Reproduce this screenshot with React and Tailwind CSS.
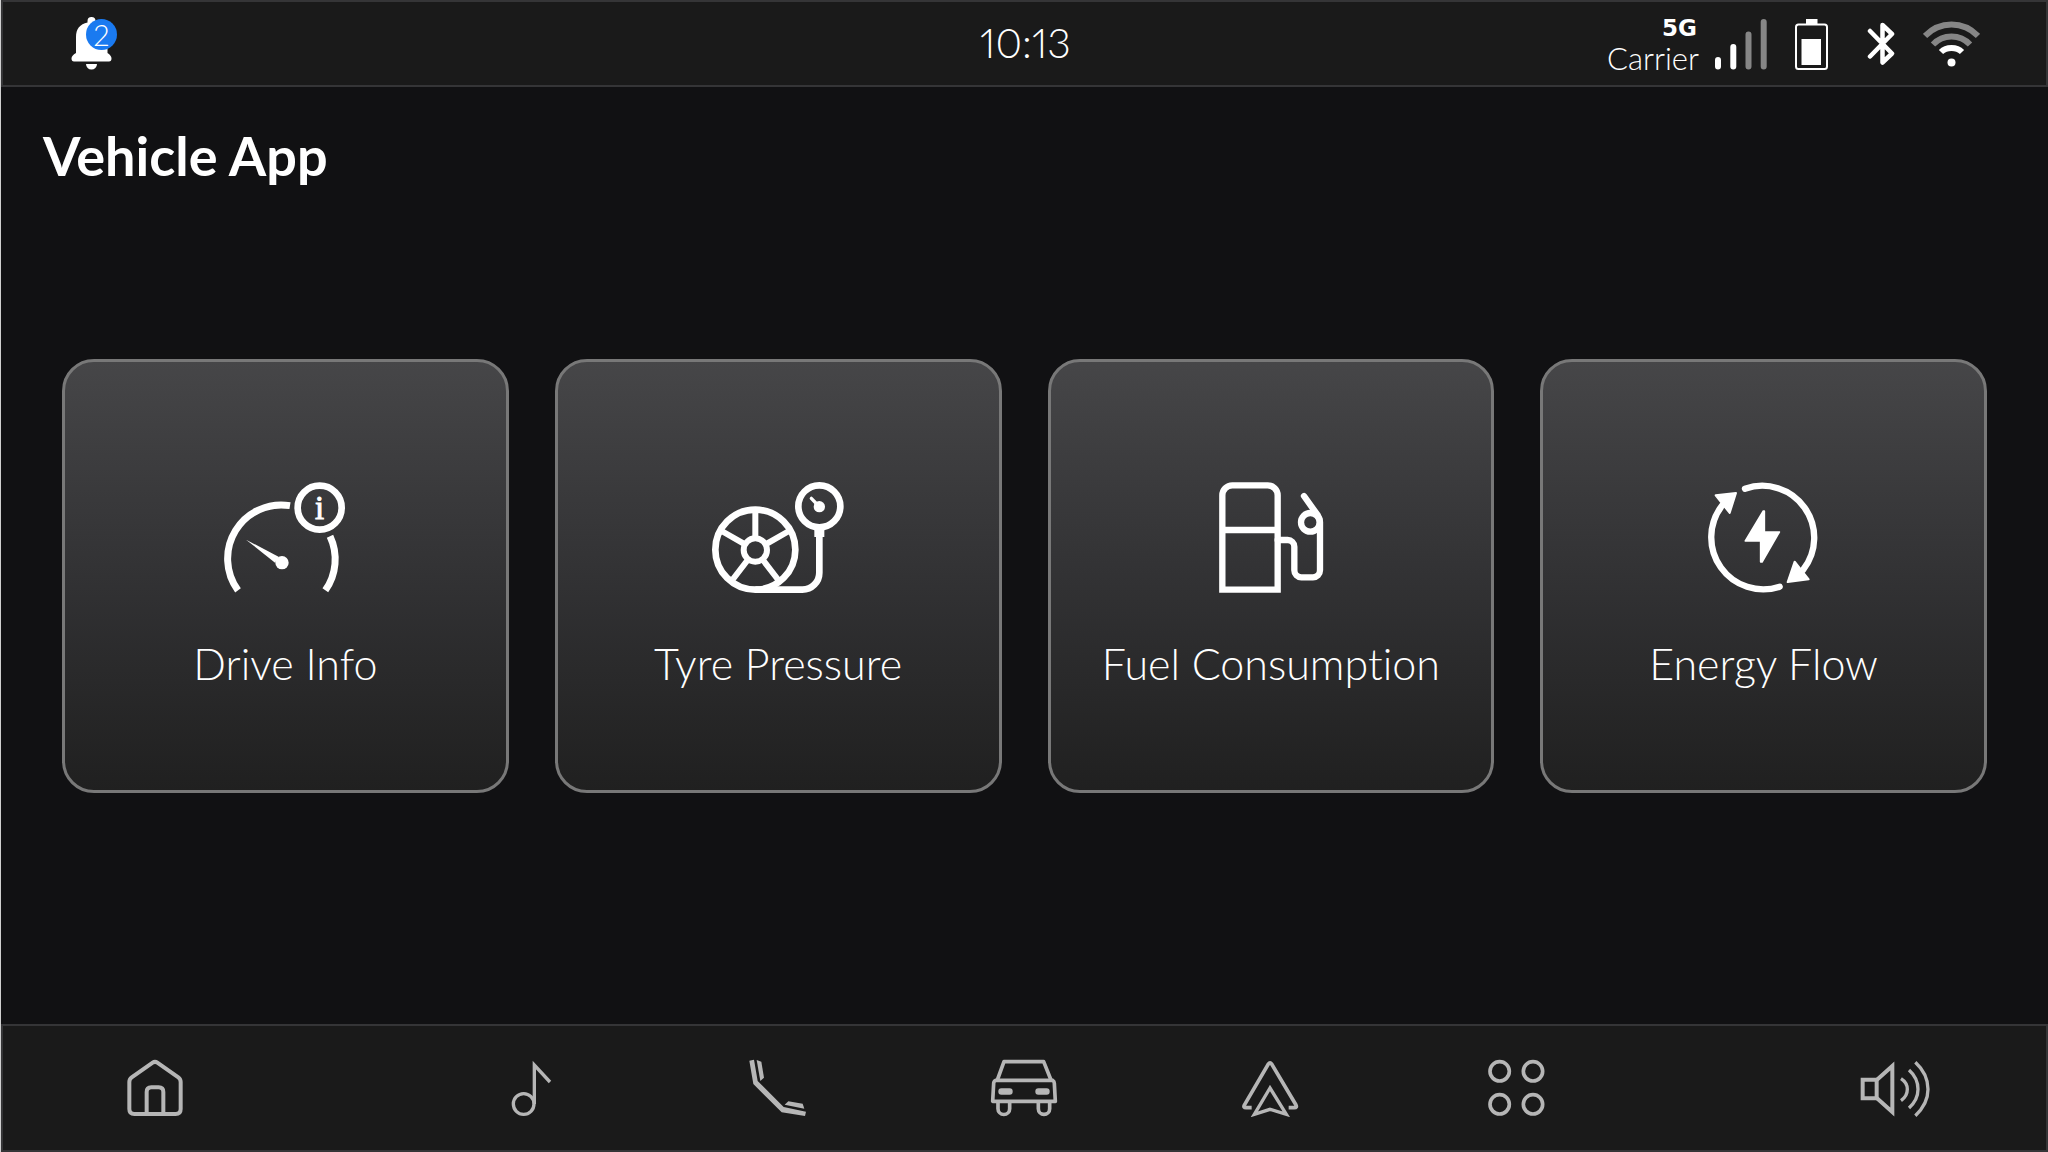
import React, { useState } from 'react'

const DriveInfoIcon = () => (
  <svg viewBox="64 66 384 336" className="h-[112px] w-32" fill="none" stroke="currentColor" aria-hidden="true">
    <path d="M115 391 A161 161 0 0 1 271 137" strokeWidth="21" />
    <path d="M391 229 A161 161 0 0 1 377 391" strokeWidth="21" />
    <circle cx="360" cy="143" r="66" strokeWidth="20" />
    <path d="M139 239 L238 291 L226 308 Z" fill="currentColor" stroke="none" />
    <circle cx="247" cy="308" r="20" fill="currentColor" stroke="none" />
    <text
      x="360"
      y="176"
      textAnchor="middle"
      fill="currentColor"
      strokeWidth="3"
      className="font-['Liberation_Serif',serif] text-[98px]"
    >
      i
    </text>
  </svg>
)

const TyrePressureIcon = () => (
  <svg viewBox="43 66 384 336" className="h-[112px] w-32 overflow-visible" fill="none" stroke="currentColor" aria-hidden="true">
    <circle cx="167" cy="269" r="120" strokeWidth="20" />
    <circle cx="167" cy="270" r="35" strokeWidth="18" />
    <path
      d="M167 150 V234 M66 213 L131 250 M268 213 L203 250 M98 360 L144 300 M236 360 L190 300"
      strokeWidth="18"
    />
    <path d="M167 389 H308 A51 51 0 0 0 359 338 V220" strokeWidth="20" />
    <path d="M359 205 V231" strokeWidth="30" />
    <circle cx="359" cy="139" r="63" strokeWidth="20" />
    <circle cx="359" cy="140" r="17" fill="currentColor" stroke="none" />
    <path d="M335 115 L357 138" strokeWidth="10" strokeLinecap="round" />
  </svg>
)

const FuelIcon = () => (
  <svg viewBox="22 66 384 336" className="h-[112px] w-32" fill="none" stroke="currentColor" strokeWidth="19" aria-hidden="true">
    <path d="M68 389 V106 A30 30 0 0 1 98 76 H204 A30 30 0 0 1 234 106 V389 Z" />
    <path d="M68 210 H234" />
    <path d="M234 240 H264 A20 20 0 0 1 284 260 V331 A21 21 0 0 0 305 352 H340 A21 21 0 0 0 361 331 V186 Q361 176 355 167 L313 108" strokeLinecap="round" />
    <circle cx="332" cy="187" r="28" />
  </svg>
)

const EnergyIcon = () => (
  <svg viewBox="31 66 384 336" className="h-[112px] w-32" fill="none" stroke="currentColor" strokeLinejoin="round" strokeLinecap="round" aria-hidden="true">
    <path d="M166 86 A156 156 0 0 1 340 330" strokeWidth="19" />
    <path d="M270 380 A156 156 0 0 1 97 137" strokeWidth="19" />
    <path d="M78 106 L139 99 L120 159 Z" fill="currentColor" strokeWidth="6" />
    <path d="M315 305 L357 358 L294 366 Z" fill="currentColor" strokeWidth="6" />
    <path d="M221 153 L167 243 H213 V306 H217 L269 216 H224 V153 Z" fill="currentColor" strokeWidth="5" />
  </svg>
)

const HomeIcon = () => (
  <svg viewBox="57 130 216 174" className="h-[58px] w-[72px]" fill="none" stroke="currentColor" strokeWidth="12" aria-hidden="true">
    <path d="M88 199 Q88 190 95 185 L158 141 Q165 136 172 141 L235 185 Q242 190 242 199 V280 Q242 295 227 295 H103 Q88 295 88 280 Z" />
    <path d="M140 295 V229 Q140 215 154 215 H176 Q190 215 190 229 V295" />
  </svg>
)

const MusicIcon = () => (
  <svg viewBox="1188 130 216 174" className="h-[58px] w-[72px]" fill="none" stroke="currentColor" strokeWidth="10" aria-hidden="true">
    <circle cx="1271" cy="265" r="31" />
    <path d="M1303 265 V148 L1350 199" />
  </svg>
)

const SeatIcon = () => (
  <svg viewBox="36 70 216 174" className="h-[58px] w-[72px]" fill="currentColor" aria-hidden="true">
    <path d="M58 75 L72 72 L83 136 L161 214 L228 228 L225 241 L155 230 L70 145 Z" />
    <path d="M80 73 L94 78 L102 126 L91 136 Z" />
    <path d="M164 207 L175 197 L218 204 L223 219 Z" />
  </svg>
)

const CarIcon = () => (
  <svg viewBox="774 70 216 174" className="h-[58px] w-[72px]" fill="none" stroke="currentColor" strokeWidth="11" strokeLinejoin="round" aria-hidden="true">
    <path d="M802 133 L822 78 H941 L963 133" />
    <path d="M797 134 H968 Q973 137 973 143 L976 197 H788 L791 143 Q791 137 797 134 Z" />
    <path d="M804 199 V219 A17 17 0 0 0 839 219 V199 M925 199 V219 A17 17 0 0 0 959 219 V199" />
    <rect x="805" y="158" width="43" height="19" rx="9" fill="currentColor" stroke="none" />
    <rect x="916" y="158" width="43" height="19" rx="9" fill="currentColor" stroke="none" />
  </svg>
)

const NavigationIcon = () => (
  <svg viewBox="42 70 216 174" className="h-[58px] w-[72px]" fill="none" stroke="currentColor" strokeWidth="11" aria-hidden="true">
    <path d="M95 216 H78 Q69 216 73 208 L145 85 Q150 78 155 85 L228 208 Q232 216 223 216 H206" />
    <path d="M150 157 L103 236 L150 221 L199 236 Z" strokeWidth="10" />
  </svg>
)

const AppsIcon = () => (
  <svg viewBox="780 70 216 174" className="h-[58px] w-[72px]" fill="none" stroke="currentColor" strokeWidth="11" aria-hidden="true">
    <circle cx="839" cy="107" r="29" />
    <circle cx="939" cy="107" r="29" />
    <circle cx="839" cy="206" r="29" />
    <circle cx="939" cy="206" r="29" />
  </svg>
)

const VolumeIcon = () => (
  <svg viewBox="51 70 216 174" className="h-[58px] w-[72px] overflow-visible" fill="none" stroke="currentColor" strokeWidth="12" aria-hidden="true">
    <path d="M68 132 H110 V188 H68 Z" />
    <path d="M111 132 L157 91 V229 L111 188" />
    <path d="M183 129 Q202 141 202 161 Q202 182 183 195 M207 103 Q234 127 234 161 Q234 193 207 217 M226 80 Q264 115 264 161 Q264 205 226 240" strokeWidth="10" />
  </svg>
)

const BellIcon = () => (
  <svg viewBox="0 0 41 53" className="h-[53px] w-[41px]" fill="currentColor" aria-hidden="true">
    <path d="M16.5 4 a4 4 0 0 1 8 0 v1.500 C32 7 36.500 12 36.500 20 V36 Q40.500 38.500 40.500 41.500 Q40.500 44.500 38 44.500 H3 Q.5 44.500 .5 41.500 Q.5 38.500 5 36 V20 C5 12 9 7 16.500 5.500 Z" />
    <path d="M15 47 H26 A5.500 5.500 0 0 1 15 47 Z" />
  </svg>
)

const SignalIcon = () => (
  <svg viewBox="0 0 52 52" className="h-[52px] w-[52px]" strokeWidth="6" strokeLinecap="round" aria-hidden="true">
    <path d="M3 42 V48.500 M18.300 29 V48.500" stroke="#ffffff" />
    <path d="M33.500 16.500 V48.500 M48.700 4 V48.500" stroke="#868686" />
  </svg>
)

const BatteryIcon = () => (
  <svg viewBox="0 0 33 52" className="h-[52px] w-[33px]" fill="currentColor" aria-hidden="true">
    <rect x="1" y="6.500" width="31" height="44.500" rx="2.500" fill="none" stroke="currentColor" strokeWidth="2" />
    <rect x="11" y="1" width="11.500" height="5.500" />
    <rect x="6.500" y="21" width="19.500" height="26" />
  </svg>
)

const BluetoothIcon = () => (
  <svg viewBox="0 0 28 44" className="h-[44px] w-7" fill="none" stroke="currentColor" strokeWidth="4.500" strokeLinecap="round" strokeLinejoin="round" aria-hidden="true">
    <path d="M3 9 L25 31.500 L15.500 40.500 V3 L25 12 L3 34.500" />
  </svg>
)

const WifiIcon = () => (
  <svg viewBox="0 0 57 46" className="h-[46px] w-[57px]" fill="none" strokeWidth="6" aria-hidden="true">
    <path d="M2 15 Q13 3.500 28.500 3.500 Q44 3.500 55 15" stroke="#868686" />
    <path d="M10 23.500 Q17.500 15.500 28.500 15.500 Q39.500 15.500 47 23.500" stroke="#868686" />
    <path d="M18 31 Q22 27 28.500 27 Q35 27 39 31" stroke="#ffffff" />
    <circle cx="28.500" cy="41.500" r="4" fill="#ffffff" />
  </svg>
)

const apps = [
  { id: 'drive', label: 'Drive Info', Icon: DriveInfoIcon },
  { id: 'tyre', label: 'Tyre Pressure', Icon: TyrePressureIcon },
  { id: 'fuel', label: 'Fuel Consumption', Icon: FuelIcon },
  { id: 'energy', label: 'Energy Flow', Icon: EnergyIcon }
]

const navItems = [
  { id: 'music', label: 'Music', Icon: MusicIcon },
  { id: 'seat', label: 'Seat', Icon: SeatIcon },
  { id: 'car', label: 'Vehicle', Icon: CarIcon },
  { id: 'navigation', label: 'Navigation', Icon: NavigationIcon },
  { id: 'apps', label: 'Apps', Icon: AppsIcon }
]

const StatusBar = () => (
  <header className="grid grid-cols-3 items-center border-2 border-[#353537] bg-[#1a1a1a] py-[11px] pr-[66px] pl-[68px]">
    <button type="button" aria-label="Notifications" className="relative justify-self-start">
      <BellIcon />
      <span className="absolute top-0.5 left-[15px] flex size-[31px] items-center justify-center rounded-full bg-[#1a7af0] text-[29px] leading-none font-light">
        2
      </span>
    </button>
    <time className="justify-self-center pb-0.5 text-[41px] leading-[48px] font-light proportional-nums">10:13</time>
    <div className="flex items-center justify-self-end">
      <div className="mr-4 flex flex-col items-end">
        <span className="pr-0.5 font-['DejaVu_Sans',sans-serif] text-[23px] leading-[30px] font-bold">5G</span>
        <span className="text-[31px] leading-[31px] font-light">Carrier</span>
      </div>
      <SignalIcon />
      <span className="ml-7"><BatteryIcon /></span>
      <span className="ml-[39px]"><BluetoothIcon /></span>
      <span className="ml-7"><WifiIcon /></span>
    </div>
  </header>
)

const App = () => {
  const [active, setActive] = useState('car')

  return (
    <div className="flex min-h-screen flex-col border-l border-[#d0d0d0] bg-[#111113] font-[Lato,sans-serif] text-white">
      <StatusBar />

      <main className="flex-1">
        <h1 className="px-[42px] pt-[39px] text-[54px] leading-[60px] font-bold">Vehicle App</h1>
        <div className="mt-[173px] grid grid-cols-4 gap-[46px] px-[61px]">
          {apps.map(({ id, label, Icon }) => (
            <button
              key={id}
              type="button"
              className="flex flex-col items-center rounded-[32px] border-3 border-[#787878] bg-linear-to-b from-[#464648] via-[#323234] to-[#202020] pt-[120px] pb-[101px]"
            >
              <Icon />
              <span className="mt-11 text-[43px] leading-[51px] font-light [font-variant-ligatures:none]">{label}</span>
            </button>
          ))}
        </div>
      </main>

      <footer className="border-2 border-[#353537] bg-[#1a1a1a]">
        <nav className="flex items-center justify-between py-[33px] pr-[117px] pl-[116px] text-[#b6b6b6]">
          <button type="button" aria-label="Home" onClick={() => setActive('home')}>
            <HomeIcon />
          </button>
          <div className="flex gap-[174px]">
            {navItems.map(({ id, label, Icon }) => (
              <button
                key={id}
                type="button"
                aria-label={label}
                aria-pressed={active === id}
                onClick={() => setActive(id)}
              >
                <Icon />
              </button>
            ))}
          </div>
          <button type="button" aria-label="Volume">
            <VolumeIcon />
          </button>
        </nav>
      </footer>
    </div>
  )
}

export default App
